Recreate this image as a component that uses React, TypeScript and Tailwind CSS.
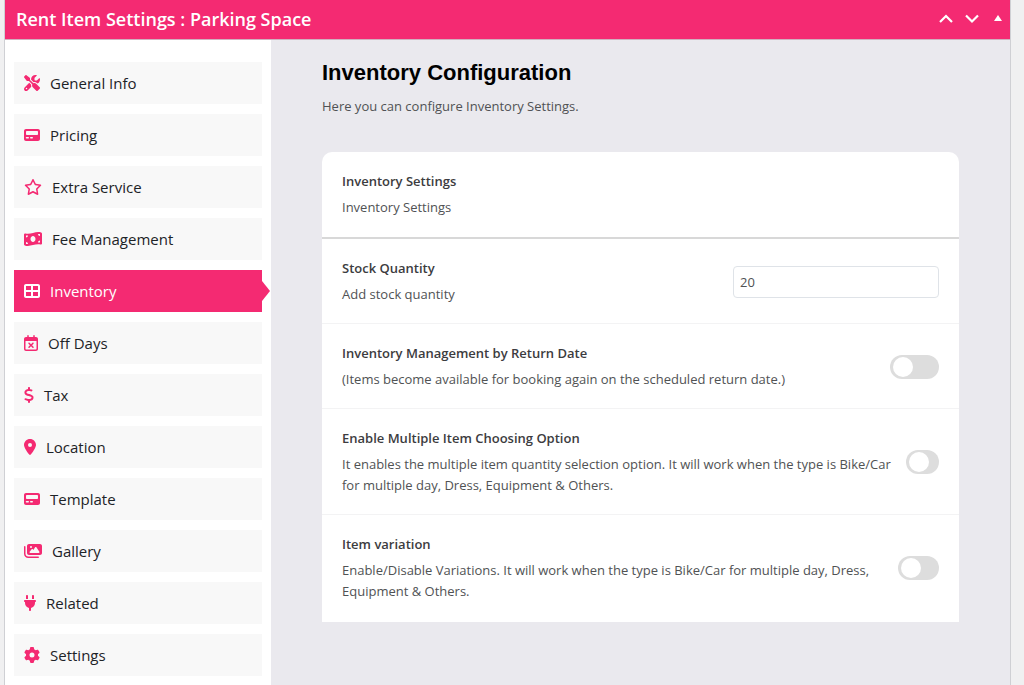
import { useState } from 'react'
import {
  FaScrewdriverWrench, FaPager, FaRegStar, FaMoneyBillWave, FaTableCellsLarge,
  FaRegCalendarXmark, FaDollarSign, FaLocationDot, FaImages, FaPlug, FaGear,
} from 'react-icons/fa6'

const navItems = [
  { id: 'general', icon: FaScrewdriverWrench, size: 'w-4', label: 'General Info' },
  { id: 'pricing', icon: FaPager, size: 'w-4', label: 'Pricing' },
  { id: 'extra', icon: FaRegStar, size: 'w-[18px]', label: 'Extra Service' },
  { id: 'fee', icon: FaMoneyBillWave, size: 'w-[18px]', label: 'Fee Management' },
  { id: 'inventory', icon: FaTableCellsLarge, size: 'w-4', label: 'Inventory' },
  { id: 'off-days', icon: FaRegCalendarXmark, size: 'w-[14px]', label: 'Off Days' },
  { id: 'tax', icon: FaDollarSign, size: 'w-[10px]', label: 'Tax' },
  { id: 'location', icon: FaLocationDot, size: 'w-3', label: 'Location' },
  { id: 'template', icon: FaPager, size: 'w-4', label: 'Template' },
  { id: 'gallery', icon: FaImages, size: 'w-[18px]', label: 'Gallery' },
  { id: 'related', icon: FaPlug, size: 'w-3', label: 'Related' },
  { id: 'settings', icon: FaGear, size: 'w-4', label: 'Settings' },
]

const switches = [
  {
    id: 'return-date',
    title: 'Inventory Management by Return Date',
    text: '(Items become available for booking again on the scheduled return date.)',
    width: 'w-[49px]',
  },
  {
    id: 'multiple-items',
    title: 'Enable Multiple Item Choosing Option',
    text: 'It enables the multiple item quantity selection option. It will work when the type is Bike/Car for multiple day, Dress, Equipment & Others.',
    width: 'w-[33px]',
  },
  {
    id: 'variation',
    title: 'Item variation',
    text: 'Enable/Disable Variations. It will work when the type is Bike/Car for multiple day, Dress, Equipment & Others.',
    width: 'w-[41px]',
  },
]

function RowText({ id, title, text }: { id: string; title: string; text: string }) {
  return (
    <div className="min-w-0">
      <label htmlFor={id} className="block mb-1.5 text-[13px] leading-5 font-semibold text-[#3c3c40]">{title}</label>
      <p className="text-[13px] leading-[21px] text-[#505254]">{text}</p>
    </div>
  )
}

export default function App() {
  const [active, setActive] = useState('inventory')
  const [quantity, setQuantity] = useState('20')

  return (
    <div className="min-h-screen flex pl-1 pr-[13px] bg-[#f0f0f1] font-['Open_Sans','Noto_Sans',sans-serif]">
      <div className="flex-1 flex flex-col border-x border-[#cfd0d4] bg-white">
        <header className="h-10 flex items-center justify-between pl-[11px] pr-2 pb-0.5 bg-[#f42a72] border-b border-[#d0b0bf] text-white">
          <h2 className="text-[18px] leading-6 font-semibold">Rent Item Settings : Parking Space</h2>
          <div className="flex items-center">
            <button aria-label="Move up" className="mr-3">
              <svg width="14" height="10" viewBox="0 0 14 10" fill="none" stroke="currentColor" strokeWidth="2.2"><path d="M1 8l6-6 6 6" /></svg>
            </button>
            <button aria-label="Move down" className="mr-[15px]">
              <svg width="14" height="10" viewBox="0 0 14 10" fill="none" stroke="currentColor" strokeWidth="2.2"><path d="M1 1.5l6 6 6-6" /></svg>
            </button>
            <button aria-label="Toggle panel">
              <svg width="8" height="10" viewBox="0 0 8 10" fill="currentColor"><path d="M4 1l4 6H0z" /></svg>
            </button>
          </div>
        </header>

        <div className="flex-1 flex">
          <nav className="w-[266px] shrink-0 flex flex-col gap-2.5 pt-[22px] px-[9px]">
            {navItems.map(({ id, icon: Icon, size, label }) => (
              <button
                key={id}
                onClick={() => setActive(id)}
                className={`relative h-[42px] flex items-center gap-2.5 px-2.5 text-[15px] leading-6 text-left ${
                  active === id ? 'bg-[#f42a72] text-white' : 'bg-[#f8f8f8] text-[#1d2327]'
                }`}
              >
                <Icon className={`${size} h-4 shrink-0 ${active === id ? 'text-white' : 'text-[#f42a72]'}`} />
                <span>{label}</span>
                {active === id && (
                  <svg className="absolute left-full top-[11px] text-[#f42a72]" width="8" height="20" viewBox="0 0 8 20" fill="currentColor">
                    <path d="M0 0l8 10-8 10z" />
                  </svg>
                )}
              </button>
            ))}
          </nav>

          <main className="flex-1 pt-5 px-[51px] bg-[#eae9ee]">
            <h1 className="font-['Liberation_Sans',sans-serif] text-[22px] leading-[26px] font-bold text-black">Inventory Configuration</h1>
            <p className="mt-2.5 text-[13px] leading-[21px] text-[#505254]">Here you can configure Inventory Settings.</p>

            <div className="mt-[35px] rounded-t-[10px] bg-white">
              <section className="py-[19px] px-5 border-b-2 border-[#d8d8d8]">
                <h3 className="mb-1.5 text-[13px] leading-5 font-semibold text-[#3c3c40]">Inventory Settings</h3>
                <p className="text-[13px] leading-[21px] text-[#505254]">Inventory Settings</p>
              </section>

              <section className="flex items-center justify-between pt-[19px] pb-[18px] px-5 border-b border-[#f3f3f4]">
                <RowText id="stock" title="Stock Quantity" text="Add stock quantity" />
                <input
                  id="stock"
                  type="text"
                  value={quantity}
                  onChange={(e) => setQuantity(e.target.value)}
                  className="w-[206px] h-8 px-1.5 rounded border border-[#dfe3e8] bg-white text-[13px] text-[#505254]"
                />
              </section>

              {switches.map(({ id, title, text, width }) => (
                <section key={id} className="flex items-center justify-between gap-2 pt-[19px] pb-[18px] px-5 border-b border-[#f3f3f4] last:border-b-0 last:pb-5">
                  <RowText id={id} title={title} text={text} />
                  <input
                    id={id}
                    type="checkbox"
                    role="switch"
                    className={`${width} h-6 shrink-0 appearance-none flex items-center px-[3px] rounded-full bg-[#dddddd] checked:bg-[#f42a72] checked:justify-end before:block before:size-5 before:rounded-full before:bg-white`}
                  />
                </section>
              ))}
            </div>
          </main>
        </div>
      </div>
    </div>
  )
}
